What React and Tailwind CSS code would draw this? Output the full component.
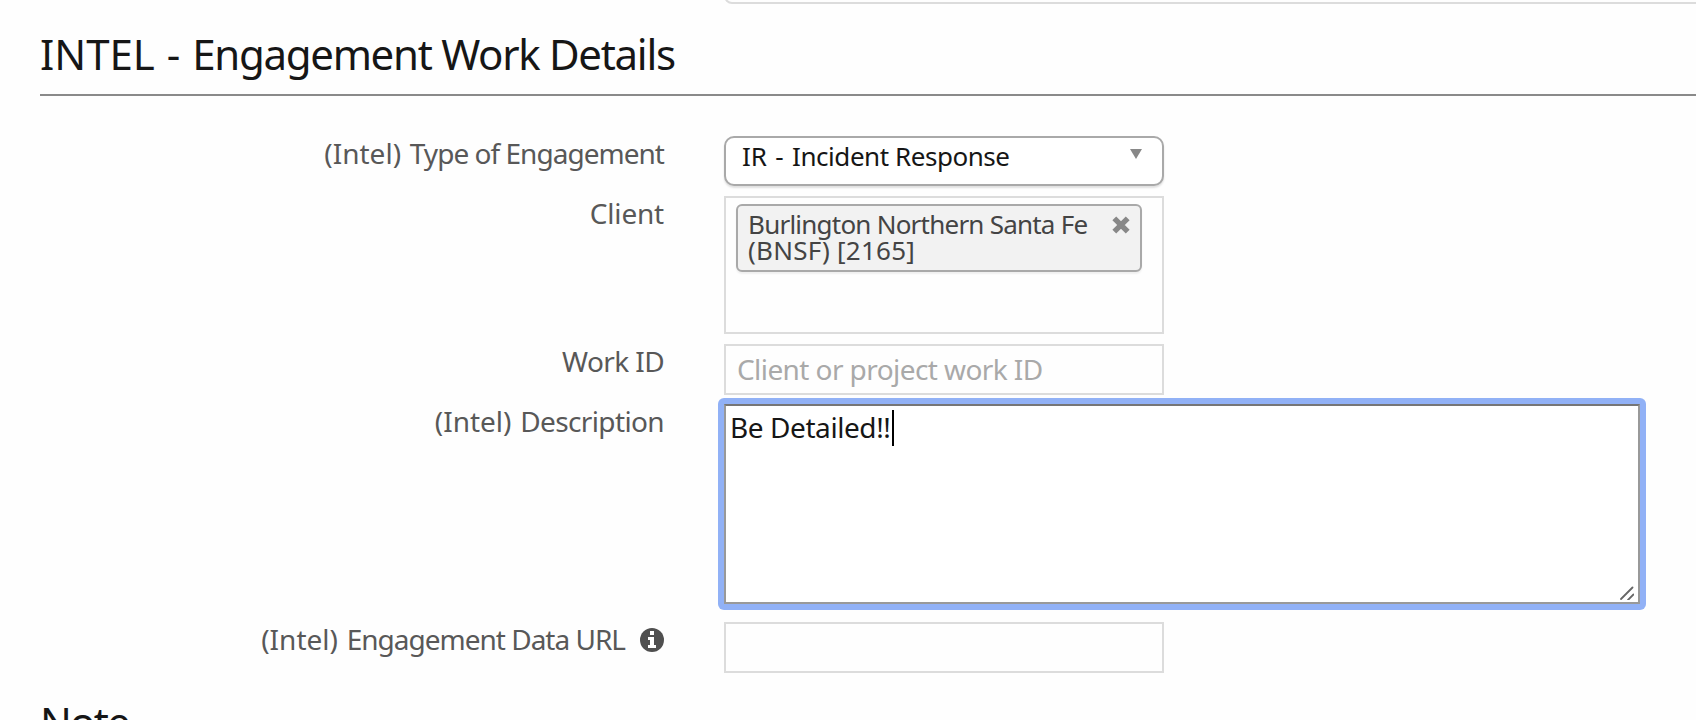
function Row({ prefix, label, labelClass, icon, className, children }) {
  return (
    <div className={`flex items-start ${className}`}>
      <div className="flex w-[664px] shrink-0 justify-end whitespace-pre text-[28px] leading-[34px] text-[#585858]">
        {prefix && <span className="[word-spacing:1.5px]">{`${prefix} `}</span>}
        <span className={labelClass}>{label}</span>
        {icon}
      </div>
      <div className="ml-[60px] shrink-0">{children}</div>
    </div>
  );
}

function InfoIcon() {
  return (
    <svg viewBox="0 0 24 24" className="ml-[15px] mt-1.5 h-6 w-6 shrink-0">
      <circle cx="12" cy="12" r="12" fill="#4f4f4f" />
      <path d="M10 3h4v4h-4zM8 9h6v8h2v3H8v-3h2v-5H8z" fill="#fefefe" />
    </svg>
  );
}

export default function App() {
  return (
    <div className="h-[720px] w-full overflow-hidden bg-[#fefefe] font-['Noto_Sans',sans-serif] text-[#161616]">
      <div className="ml-[724px] h-1 overflow-hidden">
        <div className="-mt-9 h-10 w-[1000px] rounded-[8px] border-2 border-[#dcdcdc]" />
      </div>
      <h2 className="ml-10 mt-6 whitespace-nowrap border-b-2 border-[#8a8a8a] pb-3.5 text-[42px] leading-[52px]">
        <span className="[word-spacing:1px]">INTEL - </span>
        <span className="tracking-[-1.3px]">Engagement Work Details</span>
      </h2>

      <Row className="mt-10" prefix="(Intel)" label="Type of Engagement" labelClass="tracking-[-0.97px]">
        <div className="flex h-[50px] w-[440px] justify-between rounded-[10px] border-2 border-[#a9a9a9] bg-white pl-4 pr-5 text-[26px] leading-[36px] shadow-[0_2px_2px_rgba(0,0,0,0.12)]">
          <span className="whitespace-nowrap">
            <span className="[word-spacing:1.6px]">IR - </span>
            <span className="tracking-[-0.45px]">Incident Response</span>
          </span>
          <svg viewBox="0 0 12 10" className="mt-[11px] h-2.5 w-3">
            <path d="M0 0h12L6 10z" fill="#888" />
          </svg>
        </div>
      </Row>

      <Row className="mt-2.5" label="Client" labelClass="tracking-[-0.2px]">
        <div className="h-[138px] w-[440px] border-2 border-[#dcdcdc] px-2.5 pt-1.5">
          <div className="flex h-[68px] w-[406px] justify-between rounded-[6px] border-2 border-[#a9a9a9] bg-[#f2f2f2] pl-2.5 pr-2.5 pt-[5px] text-[26px] leading-[26px] text-[#444] shadow-[0_2px_2px_rgba(0,0,0,0.06)]">
            <span className="whitespace-nowrap">
              <span className="block tracking-[-0.77px]">Burlington Northern Santa Fe</span>
              <span className="block tracking-[0.25px]">(BNSF) [2165]</span>
            </span>
            <svg viewBox="0 0 18 18" className="mt-[5px] h-[18px] w-[18px] shrink-0">
              <path d="M2.3 2.3l13.4 13.4M15.7 2.3L2.3 15.7" stroke="#888" strokeWidth="5.4" />
            </svg>
          </div>
        </div>
      </Row>

      <Row className="mt-2.5" label="Work ID" labelClass="tracking-[-0.6px]">
        <div className="h-[51px] w-[440px] border-2 border-[#dcdcdc] pl-[11px] text-[28px] leading-[46px] text-[#a9a9a9]">
          <span className="tracking-[-0.58px]">Client or project work ID</span>
        </div>
      </Row>

      <Row className="mt-[9px]" prefix="(Intel)" label="Description" labelClass="tracking-[-0.63px]">
        <div className="-m-1.5 rounded-[6px] bg-[#91b1f6] p-1.5">
          <div className="flex h-[200px] w-[916px] justify-between border-2 border-[#999] border-t-[#767676] bg-white pl-1">
            <div className="flex items-start pt-1 text-[28px]">
              <span className="leading-[34px] tracking-[-0.42px]">Be Detailed!!</span>
              <span className="ml-[1.5px] h-9 w-0.5 bg-black" />
            </div>
            <svg viewBox="0 0 14 14" className="mb-0.5 mr-1 h-3.5 w-3.5 self-end">
              <path d="M1 13L12.5 1.5M8 14L13.5 8.5" stroke="#666" strokeWidth="1.8" strokeLinecap="round" />
            </svg>
          </div>
        </div>
      </Row>

      <Row
        className="mt-[18px]"
        prefix="(Intel)"
        label="Engagement Data URL"
        labelClass="tracking-[-1px]"
        icon={<InfoIcon />}
      >
        <div className="h-[51px] w-[440px] border-2 border-[#dcdcdc]" />
      </Row>

      <h2 className="ml-10 mt-[23px] text-[42px] leading-[52px]">
        <span className="tracking-[-1.8px]">Note</span>
      </h2>
    </div>
  );
}
